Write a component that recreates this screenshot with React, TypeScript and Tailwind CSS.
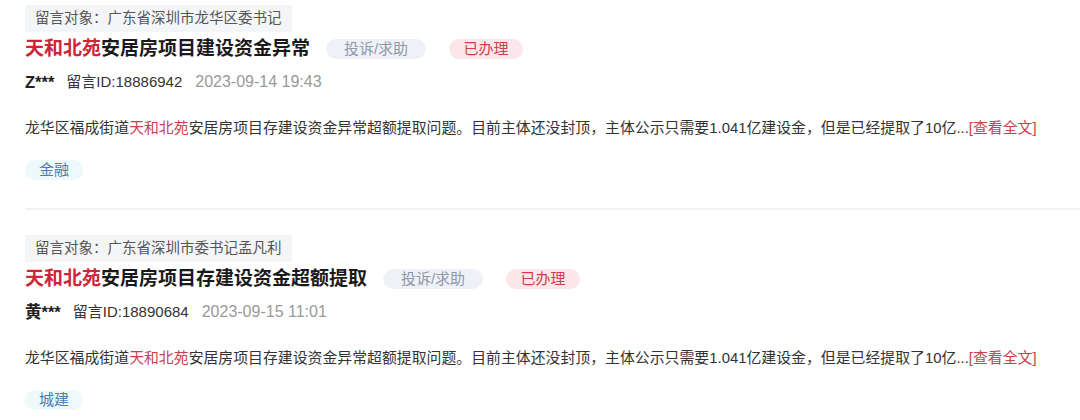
const font = { fontFamily: '"Liberation Sans", "Noto Sans CJK SC", sans-serif' };

type Post = {
  target: string;
  rest: string;
  user: string;
  id: string;
  time: string;
  tag: string;
};

const posts: Post[] = [
  {
    target: "广东省深圳市龙华区委书记",
    rest: "安居房项目建设资金异常",
    user: "Z***",
    id: "18886942",
    time: "2023-09-14 19:43",
    tag: "金融",
  },
  {
    target: "广东省深圳市委书记孟凡利",
    rest: "安居房项目存建设资金超额提取",
    user: "黄***",
    id: "18890684",
    time: "2023-09-15 11:01",
    tag: "城建",
  },
];

function PostItem({ post, last }: { post: Post; last?: boolean }) {
  return (
    <div className="flex flex-col items-start">
      <div className="h-[27px] flex items-center bg-[#f4f5f7] px-[10px] text-[14.5px] text-[#555]">
        留言对象：{post.target}
      </div>
      <div className="mt-[4px] h-[26px] flex items-center">
        <h3 className="text-[19px] font-bold text-[#1a1a1a] leading-[26px]">
          <span className="text-[#cf2637]">天和北苑</span>
          {post.rest}
        </h3>
        <span className="ml-[16px] w-[100px] h-[20px] flex items-center justify-center rounded-full bg-[#eef2f7] text-[15px] text-[#8e98a9]">
          投诉/求助
        </span>
        <span className="ml-[23px] w-[74px] h-[20px] flex items-center justify-center rounded-full bg-[#fbe6e9] text-[15px] text-[#cf3f4b]">
          已办理
        </span>
      </div>
      <div className="mt-[9px] h-[22px] flex items-center text-[15px]">
        <span className="text-[16.5px] font-bold text-[#222]">{post.user}</span>
        <span className="ml-[12px] text-[#333]">留言ID:{post.id}</span>
        <span className="ml-[13px] text-[16px] text-[#999]">{post.time}</span>
      </div>
      <p className="mt-[23px] h-[24px] leading-[24px] whitespace-nowrap text-[14.88px] text-[#333]">
        龙华区福成街道<span className="text-[#c8414d]">天和北苑</span>
        安居房项目存建设资金异常超额提取问题。目前主体还没封顶，主体公示只需要1.041亿建设金，但是已经提取了10亿...
        <span className="text-[#c8414d]">[查看全文]</span>
      </p>
      <span className="mt-[20px] w-[58px] h-[20px] flex items-center justify-center rounded-full bg-[#edf9fa] text-[15px] text-[#4d7db3]">
        {post.tag}
      </span>
      {!last && <div className="mt-[28px] mb-[25px] h-[2px] w-full bg-[#f2f2f2]" />}
    </div>
  );
}

export default function App() {
  return (
    <div className="w-[1080px] h-[420px] overflow-hidden bg-white pl-[25px] pt-[5px]" style={font}>
      {posts.map((p, i) => (
        <PostItem key={p.id} post={p} last={i === posts.length - 1} />
      ))}
    </div>
  );
}
